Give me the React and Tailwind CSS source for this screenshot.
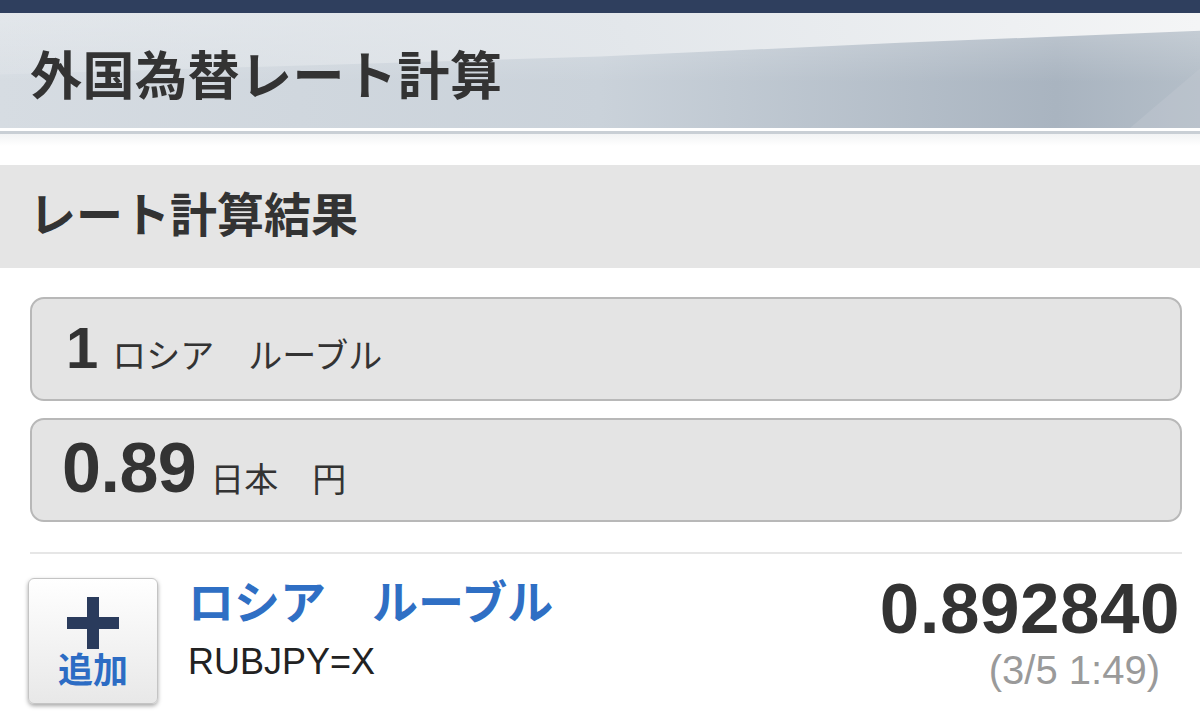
import React from 'react';

const font = { fontFamily: '"Liberation Sans", "Noto Sans CJK JP", sans-serif' };

function HeaderBg() {
    return (
        <svg className="absolute inset-0 w-full h-full" viewBox="0 0 1200 116" preserveAspectRatio="none">
            <defs>
                <linearGradient id="base" x1="0" y1="0" x2="1" y2="0">
                    <stop offset="0" stopColor="#d6dce2" />
                    <stop offset="0.5" stopColor="#cad2da" />
                    <stop offset="0.88" stopColor="#a9b4c0" />
                    <stop offset="1" stopColor="#b4bec8" />
                </linearGradient>
                <linearGradient id="top" x1="0" y1="0" x2="1" y2="0">
                    <stop offset="0" stopColor="#e4e8ec" stopOpacity="0.3" />
                    <stop offset="0.5" stopColor="#e3e7eb" stopOpacity="0.95" />
                    <stop offset="1" stopColor="#f4f5f6" />
                </linearGradient>
                <linearGradient id="shade" x1="0" y1="0" x2="0" y2="1">
                    <stop offset="0" stopColor="#ffffff" stopOpacity="0.3" />
                    <stop offset="1" stopColor="#ffffff" stopOpacity="0" />
                </linearGradient>
            </defs>
            <rect x="0" y="0" width="1200" height="116" fill="url(#base)" />
            <rect x="0" y="0" width="1200" height="70" fill="url(#shade)" />
            <polygon points="0,0 1200,0 1200,18 900,30 600,44 0,62" fill="url(#top)" />
            <polygon points="1130,116 1200,56 1200,116" fill="#c0c8d1" opacity="0.45" />
        </svg>
    );
}

export default function App() {
    return (
        <div className="w-[1200px] h-[726px] bg-white overflow-hidden text-[#333]" style={font}>
            <div className="h-[13px] bg-[#2f3f5e]" />
            <header className="relative h-[115px]">
                <HeaderBg />
                <h1 className="relative pl-[30px] pt-[34px] text-[52px] leading-[60px] font-bold text-[#333] tracking-[0.5px]">外国為替レート計算</h1>
            </header>
            <div className="h-[3px] bg-white" />
            <div className="h-[3px] bg-[#c9cfd5]" />
            <div className="h-[12px] bg-gradient-to-b from-[#f2f3f4] to-white" />

            <div className="mt-[19px] h-[103px] bg-[#e5e5e5] flex items-center pl-[29px]">
                <h2 className="text-[47px] font-bold text-[#333] leading-none pb-[2px]">レート計算結果</h2>
            </div>

            <div className="pl-[30px] pr-[18px] pt-[29px] flex flex-col gap-[17px]">
                <div className="h-[104px] rounded-[14px] border-2 border-[#b8b8b8] bg-[#e4e4e4] flex items-baseline pl-[34px] pt-[20px]">
                    <span className="text-[58px] font-bold leading-none">1</span>
                    <span className="ml-[14px] text-[34px] text-[#333] leading-none">ロシア　ルーブル</span>
                </div>
                <div className="h-[104px] rounded-[14px] border-2 border-[#b8b8b8] bg-[#e4e4e4] flex items-baseline pl-[30px] pt-[13px]">
                    <span className="text-[70px] font-bold leading-none tracking-[-0.5px]">0.89</span>
                    <span className="ml-[14px] text-[34px] text-[#333] leading-none">日本　円</span>
                </div>
            </div>

            <div className="ml-[30px] mr-[18px] mt-[30px] h-[2px] bg-[#e6e6e6]" />

            <div className="flex pl-[28px] pr-[20px] pt-[24px]">
                <button className="w-[130px] h-[126px] shrink-0 rounded-[6px] border border-[#c4c4c4] bg-gradient-to-b from-white to-[#e8e8e8] shadow-[0_2px_4px_rgba(0,0,0,0.35)] flex flex-col items-center pt-[18px]">
                    <svg width="52" height="52" viewBox="0 0 52 52">
                        <rect x="20" y="0" width="12" height="52" fill="#2a3b5c" />
                        <rect x="0" y="20" width="52" height="12" fill="#2a3b5c" />
                    </svg>
                    <span className="mt-[4px] text-[35px] leading-none font-bold text-[#2c6cc4]">追加</span>
                </button>
                <div className="ml-[30px] flex flex-col pt-[2px]">
                    <span className="text-[46px] leading-none font-bold text-[#2f6fc4]">ロシア　ルーブル</span>
                    <span className="mt-[18px] text-[36px] leading-none text-[#222]">RUBJPY=X</span>
                </div>
                <div className="ml-auto -mt-[5px] flex flex-col items-end">
                    <span className="text-[71px] leading-none font-bold text-[#333] tracking-[0.5px]">0.892840</span>
                    <span className="mt-[6px] mr-[20px] text-[40px] leading-none text-[#9a9a9a]">(3/5 1:49)</span>
                </div>
            </div>
        </div>
    );
}
